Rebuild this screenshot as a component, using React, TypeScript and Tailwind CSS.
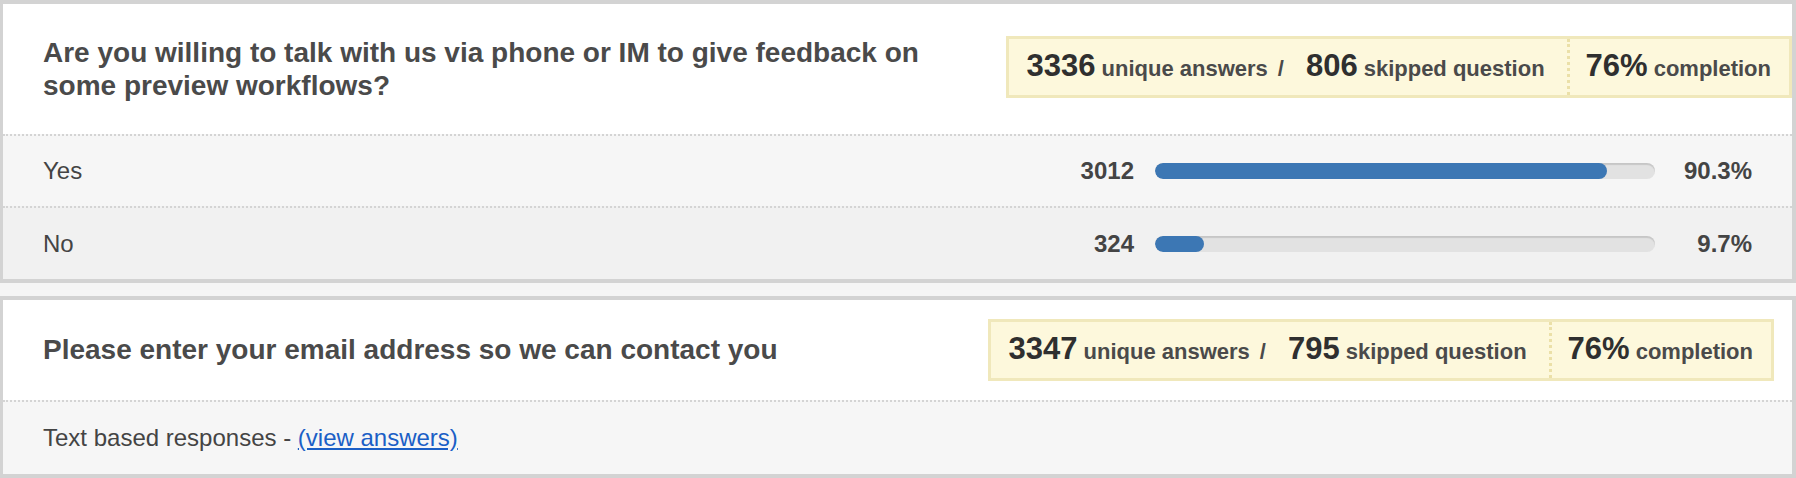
import React from "react";

type Choice = { label: string; count: number; pct: number; bg: string; h: string };

const choices: Choice[] = [
  { label: "Yes", count: 3012, pct: 90.3, bg: "bg-[#f6f6f6]", h: "h-[72px]" },
  { label: "No", count: 324, pct: 9.7, bg: "bg-[#f1f1f1]", h: "h-[73px]" },
];

const StatsBox: React.FC<{ answers: number; skipped: number; completion: number }> = ({
  answers,
  skipped,
  completion,
}) => {
  return (
    <div className="flex items-stretch h-[62px] border-[3px] border-[#f0e8bb] bg-[#fdf8dc] shrink-0">
      <div className="flex items-baseline self-center pl-[18px] pr-[22px]">
        <span className="text-[31px] font-bold text-[#2f2f2f] leading-none">{answers}</span>
        <span className="ml-[6px] text-[22px] font-bold text-[#4a4a4a]">unique answers</span>
        <span className="ml-[10px] mr-[22px] text-[22px] font-bold text-[#4a4a4a]">/</span>
        <span className="text-[31px] font-bold text-[#2f2f2f] leading-none">{skipped}</span>
        <span className="ml-[6px] text-[22px] font-bold text-[#4a4a4a]">skipped question</span>
      </div>
      {/* dotted divider */}
      <div className="flex items-center border-l-[3px] border-dotted border-[#ebe0a8] pl-[16px] pr-[18px]">
        <div className="flex items-baseline">
          <span className="text-[31px] font-bold text-[#2f2f2f] leading-none">{completion}%</span>
          <span className="ml-[6px] text-[22px] font-bold text-[#4a4a4a]">completion</span>
        </div>
      </div>
    </div>
  );
};

const ChoiceRow: React.FC<{ choice: Choice }> = ({ choice }) => {
  return (
    <div className={`flex items-center border-t-2 border-dotted border-[#d4d4d4] pl-[40px] pr-[40px] ${choice.bg} ${choice.h}`}>
      <div className="flex-1 text-[24px] text-[#444]">{choice.label}</div>
      <div className="w-[120px] text-right text-[24px] font-bold text-[#444]">{choice.count}</div>
      <div className="ml-[21px] w-[500px] h-[16px] rounded-full bg-[#e2e2e2] shadow-[inset_0_2px_1px_rgba(0,0,0,0.12)] overflow-hidden">
        <div className="h-full rounded-full bg-[#3c77b4]" style={{ width: `${choice.pct}%` }} />
      </div>
      <div className="w-[97px] text-right text-[24px] font-bold text-[#444]">{choice.pct}%</div>
    </div>
  );
};

const App: React.FC = () => {
  return (
    <div className="min-h-[478px] w-[1796px] bg-[#f5f5f5] font-['Liberation_Sans',Arial,sans-serif]">
      {/* Question 1 */}
      <section className="border-t-4 border-r-4 border-b-4 border-l-[3px] border-[#d3d3d3] bg-white">
        <header className="flex items-start justify-between h-[130px] pt-[32px] pl-[40px]">
          <h2 className="max-w-[900px] text-[28px] leading-[33px] font-bold text-[#4a4a4a]">
            Are you willing to talk with us via phone or IM to give feedback on some preview workflows?
          </h2>
          <StatsBox answers={3336} skipped={806} completion={76} />
        </header>
        {choices.map((c) => (
          <ChoiceRow key={c.label} choice={c} />
        ))}
      </section>

      {/* Question 2 */}
      <section className="mt-[13px] border-t-4 border-r-4 border-b-4 border-l-[3px] border-[#d3d3d3] bg-white">
        <header className="flex items-center justify-between h-[100px] pl-[40px] pr-[18px]">
          <h2 className="text-[28px] font-bold text-[#4a4a4a]">
            Please enter your email address so we can contact you
          </h2>
          <StatsBox answers={3347} skipped={795} completion={76} />
        </header>
        <div className="flex items-center h-[74px] border-t-2 border-dotted border-[#d4d4d4] bg-[#f6f6f6] pl-[40px] text-[24px] text-[#444]">
          Text based responses -&nbsp;
          <a href="#" className="text-[#1b5fc6] underline">
            (view answers)
          </a>
        </div>
      </section>
    </div>
  );
};

export default App;
